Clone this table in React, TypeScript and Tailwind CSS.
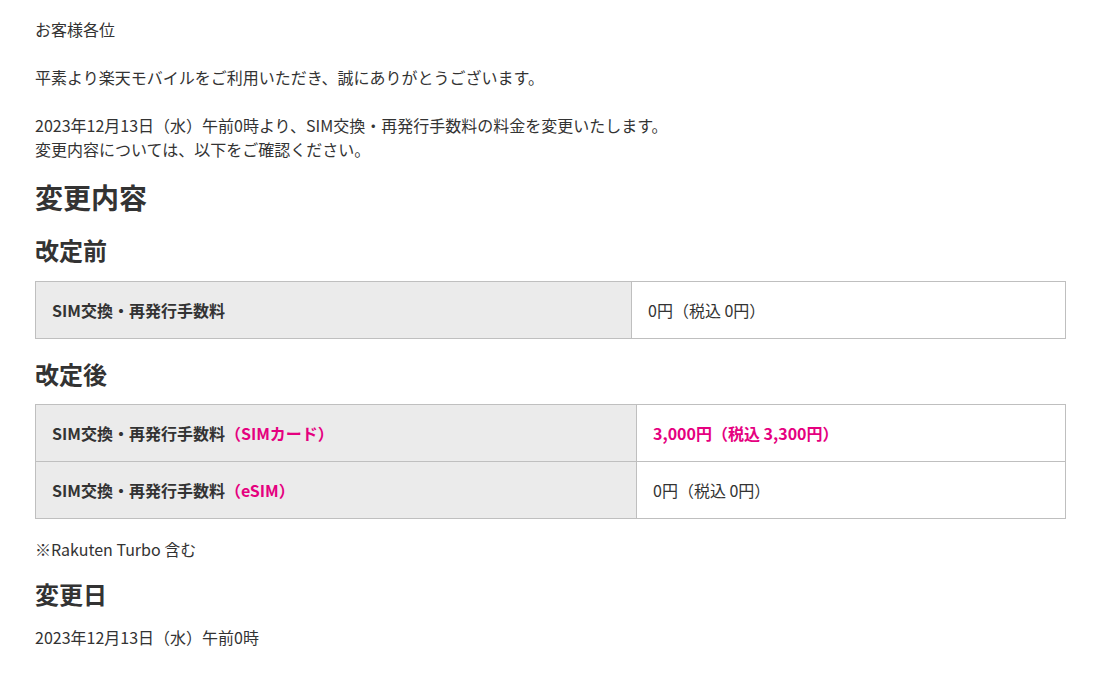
const font = {
  fontFamily: '"Noto Sans CJK JP", "Noto Sans", sans-serif',
};

type Row = { label: string; sub?: string; price: string; highlight?: boolean };

const FeeTable = ({ rows, labelWidth }: { rows: Row[]; labelWidth: string }) => (
  <table className="w-full border-collapse text-[16px] leading-6">
    <tbody>
      {rows.map((row, i) => (
        <tr key={i}>
          <th
            className={`${labelWidth} border border-[#bfbfbf] bg-[#ebebeb] px-4 py-4 text-left font-bold text-[#333]`}
          >
            {row.label}
            {row.sub && <span className="text-[#e5007f]">{row.sub}</span>}
          </th>
          <td
            className={`border border-[#bfbfbf] px-4 py-4 ${
              row.highlight ? "font-bold text-[#e5007f]" : "text-[#333]"
            }`}
          >
            {row.price}
          </td>
        </tr>
      ))}
    </tbody>
  </table>
);

export default function App() {
  return (
    <div
      className="min-h-screen bg-white px-[35px] pt-[17px] text-[16px] leading-6 text-[#333]"
      style={font}
    >
      <div className="w-[1031px]">
        <p>お客様各位</p>
        <p className="mt-6">
          平素より楽天モバイルをご利用いただき、誠にありがとうございます。
        </p>
        <p className="mt-6">
          2023年12月13日（水）午前0時より、SIM交換・再発行手数料の料金を変更いたします。
          <br />
          変更内容については、以下をご確認ください。
        </p>

        <h2 className="mt-[15px] text-[28px] font-bold leading-[42px]">変更内容</h2>

        <h3 className="mt-[14px] text-[24px] font-bold leading-9">改定前</h3>
        <div className="mt-[13px]">
          <FeeTable
            labelWidth="w-[596px]"
            rows={[{ label: "SIM交換・再発行手数料", price: "0円（税込 0円）" }]}
          />
        </div>

        <h3 className="mt-[17px] text-[24px] font-bold leading-9">改定後</h3>
        <div className="mt-[12px]">
          <FeeTable
            labelWidth="w-[601px]"
            rows={[
              {
                label: "SIM交換・再発行手数料",
                sub: "（SIMカード）",
                price: "3,000円（税込 3,300円）",
                highlight: true,
              },
              {
                label: "SIM交換・再発行手数料",
                sub: "（eSIM）",
                price: "0円（税込 0円）",
              },
            ]}
          />
        </div>

        <p className="mt-[18px]">※Rakuten Turbo 含む</p>

        <h3 className="mt-[15px] text-[24px] font-bold leading-9">変更日</h3>
        <p className="mt-[13px]">2023年12月13日（水）午前0時</p>
      </div>
    </div>
  );
}
